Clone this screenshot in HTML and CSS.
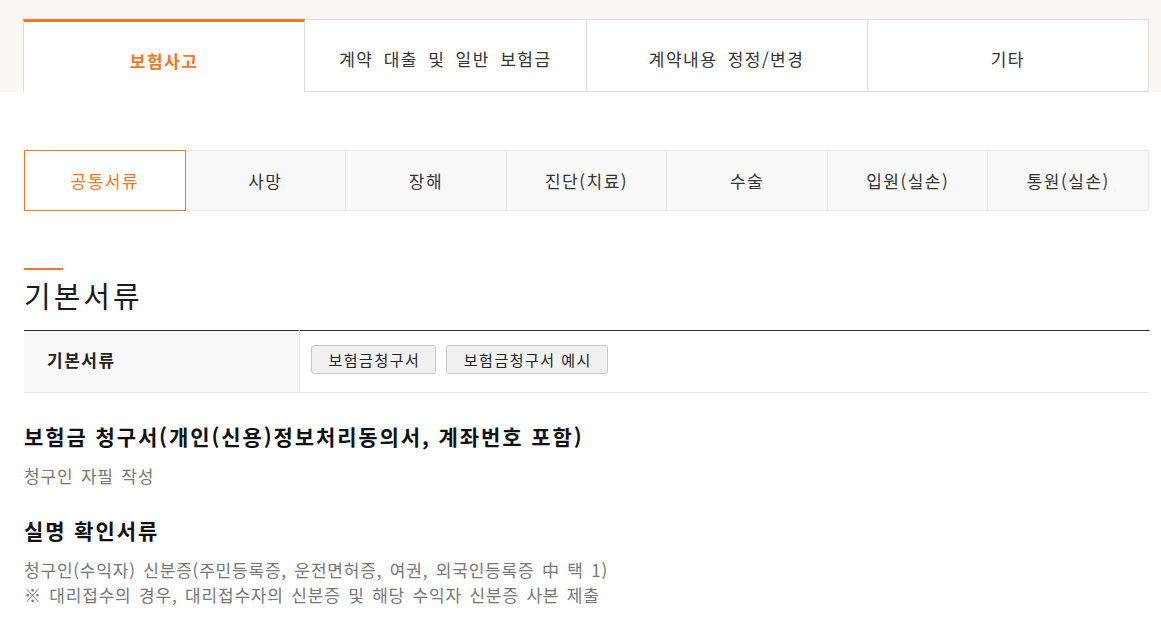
FILE: index.html
```html
<!DOCTYPE html>
<html lang="ko">
<head>
    <meta charset="UTF-8">
    <meta name="viewport" content="width=device-width, initial-scale=1.0">
    <title>보험금 청구 서류</title>
    <link rel="stylesheet" href="styles.css">
</head>
<body>
    <div class="top-area">
        <ul class="main-tabs">
            <li class="on">보험사고</li>
            <li>계약 대출 및 일반 보험금</li>
            <li>계약내용 정정/변경</li>
            <li>기타</li>
        </ul>
    </div>

    <div class="content">
        <ul class="sub-tabs">
            <li class="on">공통서류</li>
            <li>사망</li>
            <li>장해</li>
            <li>진단(치료)</li>
            <li>수술</li>
            <li>입원(실손)</li>
            <li>통원(실손)</li>
        </ul>

        <h2 class="section-title">기본서류</h2>
        <table class="doc-table">
            <tr>
                <th>기본서류</th>
                <td>
                    <button type="button" class="btn">보험금청구서</button>
                    <button type="button" class="btn">보험금청구서 예시</button>
                </td>
            </tr>
        </table>

        <div class="doc-item">
            <h3>보험금 청구서(개인(신용)정보처리동의서, 계좌번호 포함)</h3>
            <p>청구인 자필 작성</p>
        </div>
        <div class="doc-item">
            <h3>실명 확인서류</h3>
            <p>청구인(수익자) 신분증(주민등록증, 운전면허증, 여권, 외국인등록증 中 택 1)<br>※ 대리접수의 경우, 대리접수자의 신분증 및 해당 수익자 신분증 사본 제출</p>
        </div>
    </div>
</body>
</html>
```

FILE: styles.css
```css
/* 보험금 청구 서류 안내 */
body {
    margin: 0;
    padding: 0;
    font-family: "Noto Sans CJK KR", "Noto Sans", sans-serif;
    color: #222;
    background-color: #fff;
}

ul {
    margin: 0;
    padding: 0;
    list-style: none;
}

.top-area {
    background-color: #fcf7f3;
    padding: 19px 12px 0 23px;
    height: 73px;
}

.main-tabs {
    display: flex;
    height: 73px;
}

.main-tabs li {
    flex: 1;
    display: flex;
    align-items: center;
    justify-content: center;
    padding-top: 6px;
    background-color: #fff;
    border: 1px solid #ddd;
    border-left: none;
    font-size: 17px;
    letter-spacing: 1.5px;
    word-spacing: 4px;
    color: #333;
    box-sizing: border-box;
}

.main-tabs li:first-child {
    border-left: 1px solid #ddd;
}

.main-tabs li.on {
    border-top: 3px solid #f47725;
    border-bottom: none;
    color: #f47725;
    font-weight: bold;
}

.content {
    padding: 58px 12px 40px 24px;
}

.sub-tabs {
    display: flex;
    height: 61px;
}

.sub-tabs li {
    flex: 1;
    display: flex;
    align-items: center;
    justify-content: center;
    background-color: #f9f9f9;
    border: 1px solid #e8e8e8;
    border-left: none;
    font-size: 17px;
    letter-spacing: 1.5px;
    color: #333;
    box-sizing: border-box;
}

.sub-tabs li.on {
    background-color: #fff;
    border: 1px solid #f47725;
    color: #f47725;
}

.section-title {
    margin: 57px 0 16px;
    padding-top: 8px;
    position: relative;
    font-size: 29px;
    font-weight: normal;
    line-height: 38px;
    letter-spacing: 3px;
    color: #1a1a1a;
}

.section-title::before {
    content: "";
    position: absolute;
    top: 0;
    left: 0;
    width: 39px;
    height: 2px;
    background-color: #f47725;
}

.doc-table {
    width: 100%;
    border-collapse: collapse;
    border-top: 1px solid #333;
    border-bottom: 1px solid #e5e5e5;
}

.doc-table th,
.doc-table td {
    height: 62px;
    padding-bottom: 6px;
    box-sizing: border-box;
}

.doc-table th {
    width: 275px;
    padding-left: 23px;
    text-align: left;
    font-size: 17px;
    letter-spacing: 1.5px;
    background-color: #f9f9f9;
    border-right: 1px solid #e8e8e8;
}

.doc-table td {
    padding-left: 11px;
}

.btn {
    height: 29px;
    padding: 0 15px 0 17px;
    margin-right: 5px;
    font-family: inherit;
    font-size: 15px;
    letter-spacing: 1.5px;
    color: #222;
    background-color: #f1f1f1;
    border: 1px solid #c8c8c8;
    border-radius: 3px;
    cursor: pointer;
}

.doc-item h3 {
    margin: 28px 0 12px;
    font-size: 21px;
    line-height: 30px;
    letter-spacing: 1.9px;
    color: #111;
}

.doc-item p {
    margin: 0;
    font-size: 17px;
    line-height: 25px;
    letter-spacing: 0.8px;
    word-spacing: 2px;
    color: #777;
}

.doc-item + .doc-item h3 {
    margin-top: 27px;
}
```
